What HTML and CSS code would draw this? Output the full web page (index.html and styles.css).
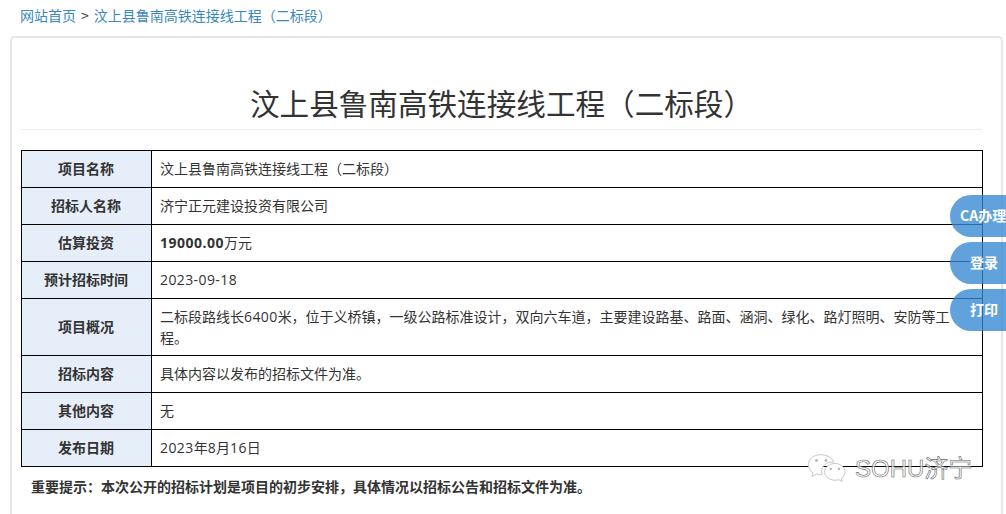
FILE: index.html
```html
<!DOCTYPE html>
<html lang="zh-CN">
<head>
<meta charset="utf-8">
<title>汶上县鲁南高铁连接线工程（二标段）</title>
<link rel="stylesheet" href="styles.css">
</head>
<body>
<nav class="crumbs"><a>网站首页</a><span class="sep">&gt;</span><a>汶上县鲁南高铁连接线工程（二标段）</a></nav>
<main class="card">
  <h1 class="title">汶上县鲁南高铁连接线工程（二标段）</h1>
  <table class="info">
    <tr><th>项目名称</th><td>汶上县鲁南高铁连接线工程（二标段）</td></tr>
    <tr><th>招标人名称</th><td>济宁正元建设投资有限公司</td></tr>
    <tr><th>估算投资</th><td><b class="num">19000.00</b>万元</td></tr>
    <tr><th>预计招标时间</th><td><span class="num">2023-09-18</span></td></tr>
    <tr class="tall"><th>项目概况</th><td>二标段路线长<span class="num">6400</span>米，位于义桥镇，一级公路标准设计，双向六车道，主要建设路基、路面、涵洞、绿化、路灯照明、安防等工程。</td></tr>
    <tr><th>招标内容</th><td>具体内容以发布的招标文件为准。</td></tr>
    <tr><th>其他内容</th><td>无</td></tr>
    <tr><th>发布日期</th><td><span class="num">2023</span>年<span class="num">8</span>月<span class="num">16</span>日</td></tr>
  </table>
  <p class="notice">重要提示：本次公开的招标计划是项目的初步安排，具体情况以招标公告和招标文件为准。</p>
</main>
<aside class="float">
  <a class="fbtn">CA办理</a>
  <a class="fbtn">登录</a>
  <a class="fbtn">打印</a>
</aside>
<div class="mark">
  <svg class="mark-icon" width="40" height="34" viewBox="0 0 42 34" aria-hidden="true">
    <path d="M14 2C7 2 1.500 6.500 1.500 12.500c0 3.500 1.800 6.300 4.800 8.300l-1.300 4 4.800-2.500c1.600.4 3 .7 4.700.7h1.500c-.5-1.300-.7-2.300-.7-3.500 0-5.500 5-9.800 11.500-9.800h1.200C26.500 5 21 2 14 2z" fill="#fff" stroke="#c4c4c4" stroke-width="1"/>
    <path d="M40 20c0-5-5-8.800-10.500-8.800C23.500 11.200 18.500 15 18.500 20s5 8.800 11 8.800c1.300 0 2.600-.2 3.800-.6l3.700 2-1-3.300c2.400-1.700 4-4.200 4-6.900z" fill="#fff" stroke="#c4c4c4" stroke-width="1"/>
    <circle cx="10" cy="8" r="1.400" fill="#b0b0b0"/><circle cx="20" cy="8" r="1.400" fill="#b0b0b0"/>
    <circle cx="25" cy="17" r="1.200" fill="#b0b0b0"/><circle cx="33.500" cy="17" r="1.200" fill="#b0b0b0"/>
  </svg>
  <span class="mark-text">SOHU济宁</span>
</div>
</body>
</html>
```
FILE: styles.css
```css
* { box-sizing: border-box; }
html, body { margin: 0; height: 514px; overflow: hidden; }
body {
  background: #fff;
  color: #333;
  font: 14px/20px "Noto Sans CJK SC", "Open Sans", sans-serif;
  padding: 5px 3px 0 10px;
  position: relative;
}
.crumbs { padding-left: 10px; height: 31px; line-height: 20px; color: #333; font-size: 14px; }
.crumbs a { color: #3a87c0; }
.sep { margin: 0 5px; }
.card {
  height: 500px;
  border: 2px solid #e6e6e6;
  border-bottom: 0;
  border-radius: 5px 5px 0 0;
  padding: 0 19px 0 9px;
}
.title {
  margin: 0;
  height: 92px;
  padding-top: 44px;
  border-bottom: 1px solid #eee;
  text-align: center;
  font-weight: 400;
  font-size: 29.600px;
  line-height: 42px;
  color: #333;
}
.info {
  margin-top: 20px;
  width: 962px;
  border-collapse: collapse;
  table-layout: fixed;
  border: 1px solid #000;
}
.info tr { height: 37px; }
.info tr.tall { height: 57px; }
.info th, .info td { border: 1px solid #000; padding: 0 8px 2px 8px; font-size: 14px; line-height: 20px; }
.info th { width: 130px; background: #e6eef9; font-weight: 700; text-align: center; padding: 0 1px 2px 0; }
.num { font-family: "Open Sans", sans-serif; letter-spacing: 0.4px; }
b.num { font-weight: 700; letter-spacing: 0.5px; }
.notice { margin: 9px 0 0 10px; font-size: 14px; font-weight: 700; line-height: 20px; color: #333; }
.float {
  position: absolute;
  left: 950px;
  top: 195px;
  width: 56px;
  display: flex;
  flex-direction: column;
  gap: 5px;
  overflow: hidden;
}
.fbtn {
  display: block;
  height: 42px;
  width: 70px;
  padding-left: 10px;
  border-radius: 21px 0 0 21px;
  background: rgba(52, 136, 212, 0.78);
  color: #fff;
  font-weight: 700;
  font-size: 14px;
  line-height: 40px;
  white-space: nowrap;
}
.fbtn + .fbtn { padding-left: 20px; }
.mark {
  position: absolute;
  left: 807px;
  top: 452px;
  display: flex;
  align-items: center;
  gap: 8px;
}
.mark-text {
  font-family: "Liberation Sans", "Noto Sans CJK SC", sans-serif;
  font-size: 24px;
  line-height: 34px;
  color: rgba(255, 255, 255, 0.7);
  -webkit-text-stroke: 0.6px #666;
  white-space: nowrap;
}
```
